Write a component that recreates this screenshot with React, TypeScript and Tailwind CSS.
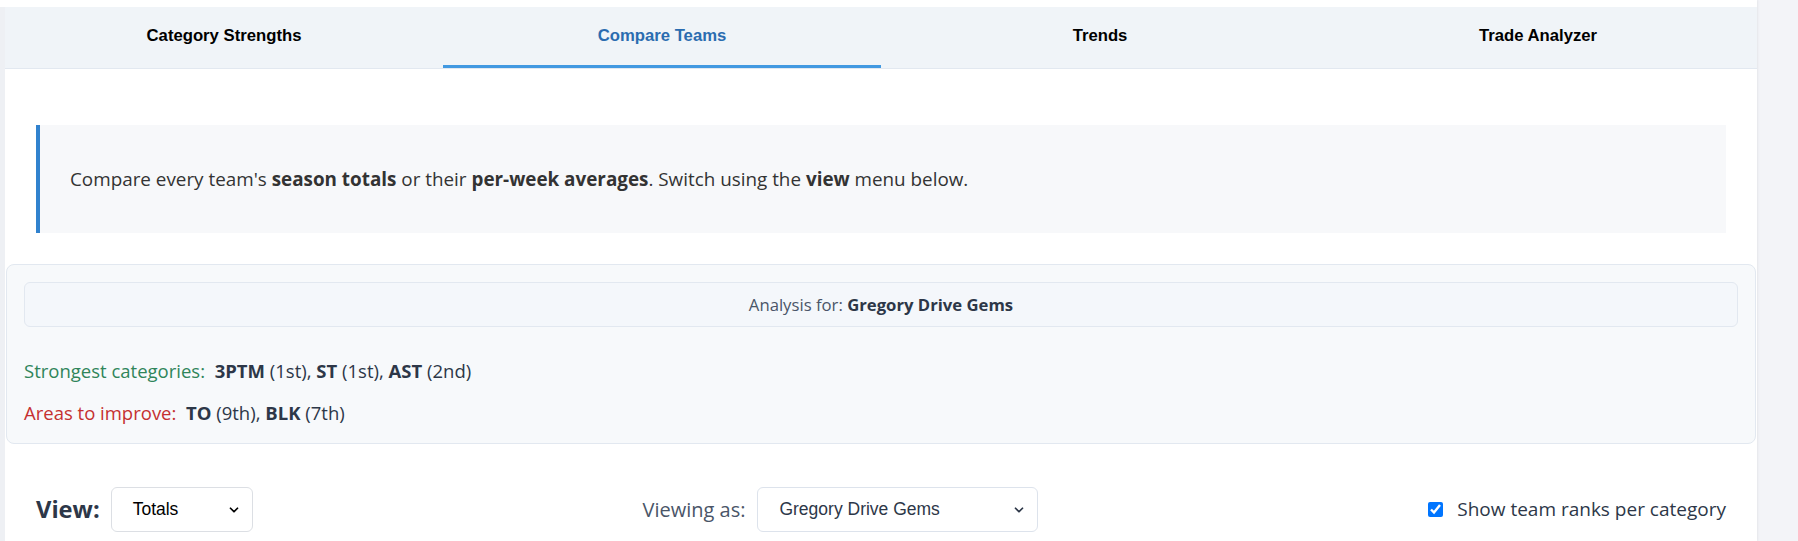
import { ChevronDown } from 'lucide-react'

const tabs = ['Category Strengths', 'Compare Teams', 'Trends', 'Trade Analyzer']

export default function App() {
  const body = { fontFamily: '"Open Sans", "Noto Sans", sans-serif' }
  const arial = { fontFamily: '"Liberation Sans", Arial, sans-serif' }
  return (
    <div className="flex min-h-[541px] w-full bg-[#f3f4f8]">
      <div className="w-[1757px] bg-white pt-[7px] shadow-[1px_0_2px_rgba(0,0,0,0.06)]">
        <div className="min-h-[534px] border-l-[5px] border-[#eef0f4]">
          <div className="flex h-[62px] border-b border-[#e2e8f0] bg-[#f0f4f8]" style={arial}>
            {tabs.map((t, i) => (
              <div
                key={t}
                className={
                  i === 1
                    ? 'flex flex-1 items-center justify-center border-b-[3px] border-[#4299e1] pb-[1px] text-[16.7px] font-bold text-[#2b6cb0]'
                    : 'flex flex-1 items-center justify-center pb-[4px] text-[16.7px] font-bold text-black'
                }
              >
                {t}
              </div>
            ))}
          </div>

          <div className="px-[31px] pt-[56px]" style={body}>
            <div className="flex h-[108px] items-center border-l-4 border-[#3182ce] bg-[#f7f8fa] pl-[30px] text-[18.85px] text-[#333]">
              <p>
                Compare every team's <b>season totals</b> or their <b>per-week averages</b>. Switch using the <b>view</b> menu below.
              </p>
            </div>
          </div>

          <div className="mx-px mt-[31px] rounded-lg border border-[#e2e8f0] bg-[#f7f9fb] px-[17px] pt-[17px] pb-[16px]" style={body}>
            <div className="flex h-[45px] items-center justify-center rounded-md border border-[#e2e8f0] bg-[#f4f7fb] text-[16.7px] text-[#4a5568]">
              <span>
                Analysis for: <b className="text-[#2d3748]">Gregory Drive Gems</b>
              </span>
            </div>
            <div className="mt-[30px] text-[18.5px] leading-[28px] text-[#2d3748]">
              <span className="text-[#2f855a]">Strongest categories:</span>&nbsp; <b>3PTM</b> (1st), <b>ST</b> (1st), <b>AST</b> (2nd)
            </div>
            <div className="mt-[14px] text-[18.5px] leading-[28px] text-[#2d3748]">
              <span className="text-[#c53030]">Areas to improve:</span>&nbsp; <b>TO</b> (9th), <b>BLK</b> (7th)
            </div>
          </div>

          <div className="flex items-center justify-between px-[31px] pt-[43px]" style={body}>
            <div className="flex items-center">
              <span className="text-[23.7px] font-bold text-[#2d3748]">View:</span>
              <div className="ml-[11px] flex h-[45px] w-[142px] items-center justify-between rounded-md border border-[#dcdfe4] bg-white pl-[21px] pr-[11px] text-[17.5px] text-black" style={arial}>
                Totals
                <ChevronDown size={14} strokeWidth={3} />
              </div>
            </div>
            <div className="flex items-center">
              <span className="text-[20px] text-[#4a5568]">Viewing as:</span>
              <div className="ml-[12px] flex h-[45px] w-[281px] items-center justify-between rounded-md border border-[#dde3ec] bg-white pl-[21px] pr-[11px] text-[17.5px] text-[#2d3748]" style={arial}>
                Gregory Drive Gems
                <ChevronDown size={14} strokeWidth={3} />
              </div>
            </div>
            <div className="flex items-center">
              <input type="checkbox" defaultChecked className="h-[15px] w-[15px] accent-[#0075ff]" />
              <span className="ml-[14px] text-[19px] text-[#2d3748]">Show team ranks per category</span>
            </div>
          </div>
        </div>
      </div>
    </div>
  )
}
